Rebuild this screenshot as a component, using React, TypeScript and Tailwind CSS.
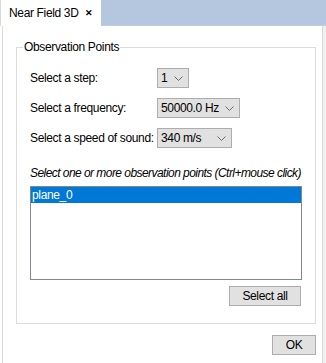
import React from 'react'

type Combo = {
  label: string;
  value: string;
  width: string;
}

const combos: Combo[] = [
  { label: 'Select a step:', value: '1', width: 'w-[32px]' },
  { label: 'Select a frequency:', value: '50000.0 Hz', width: 'w-[83px]' },
  { label: 'Select a speed of sound:', value: '340 m/s', width: 'w-[75px]' },
]

function Chevron() {
  return (
    <svg width="9" height="5" viewBox="0 0 9 5" className="shrink-0">
      <path d="M0.5 0.5 L4.5 4.5 L8.5 0.5" fill="none" stroke="#6a6a6a" strokeWidth="1" />
    </svg>
  )
}

function App() {
  return (
    <div className="w-[326px] h-[363px] flex flex-col bg-white text-black text-[12px] tracking-[-0.35px] font-['Liberation_Sans',sans-serif] overflow-hidden whitespace-nowrap">
      {/* tab strip */}
      <div className="h-[26px] flex shrink-0">
        <div className="w-[101px] bg-white border-l border-[#d9d9d9] flex items-center pl-[8px] gap-[7px]">
          <span className="leading-none">Near Field 3D</span>
          <span className="font-bold text-[9px] leading-none">✕</span>
        </div>
        <div className="flex-1 bg-[#b4c7df] border-b border-[#c3cedc]" />
      </div>

      <div className="flex-1 flex">
        <div className="flex-1 border-l border-[#dadada] ml-[2px] flex flex-col pl-[13px] pr-[6px]">
          {/* group box */}
          <div className="relative mt-[21px] h-[277px] border border-[#dcdcdc] flex flex-col pl-[13px] pr-[13px] pt-[20px]">
            <span className="absolute -top-[8px] left-[6px] bg-white px-[1px] leading-[14px]">Observation Points</span>

            <div className="flex flex-col gap-[10px]">
              {combos.map((c) => (
                <div key={c.label} className="flex items-center h-[20px]">
                  <span className="w-[127px]">{c.label}</span>
                  <div className={`${c.width} h-[20px] bg-[#e1e1e1] border border-[#adadad] flex items-center justify-between pl-[3px] pr-[5px]`}>
                    <span>{c.value}</span>
                    <Chevron />
                  </div>
                </div>
              ))}
            </div>

            <div className="italic mt-[18px] leading-[14px] tracking-[-0.55px]">
              Select one or more observation points (Ctrl+mouse click)
            </div>

            <div className="mt-[6px] h-[94px] border border-[#828790]">
              <div className="h-[16px] bg-[#0078d7] text-white leading-[16px] pl-[1px]">plane_0</div>
            </div>

            <div className="flex justify-end mt-[6px] pr-[1px]">
              <button className="w-[72px] h-[20px] bg-[#e1e1e1] border border-[#adadad] leading-none">Select all</button>
            </div>
          </div>

          <div className="flex justify-end mt-[11px]">
            <button className="w-[44px] h-[20px] bg-[#e1e1e1] border border-[#adadad] leading-none">OK</button>
          </div>
        </div>
        <div className="w-[4px] border-l border-[#d9d9d9] bg-[#f0f0f0]" />
      </div>
    </div>
  )
}

export default App
